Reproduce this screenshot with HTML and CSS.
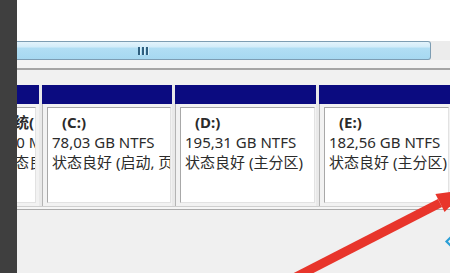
FILE: index.html
```html
<!DOCTYPE html>
<html lang="zh-CN">
<head>
    <meta charset="UTF-8">
    <title>磁盘管理</title>
    <link rel="stylesheet" href="styles.css">
</head>
<body>
    <div class="window">
        <div class="side-strip"></div>
        <div class="main">
            <div class="top-blank"></div>
            <div class="hscroll">
                <div class="thumb">
                    <span class="grip"><i></i><i></i><i></i></span>
                </div>
                <div class="track"></div>
            </div>
            <div class="band-top"></div>
            <div class="band-bottom"></div>

            <!-- 分区列表 -->
            <div class="volumes">
                <div class="vol vol-clip">
                    <div class="vol-head"></div>
                    <div class="vol-body">
                        <div class="vol-box">
                            <div class="shift">
                                <div class="line name">系统(</div>
                                <div class="line">100 MB NTFS</div>
                                <div class="line">状态良好</div>
                            </div>
                        </div>
                    </div>
                </div>
                <div class="vol vol-c">
                    <div class="vol-head"></div>
                    <div class="vol-body">
                        <div class="vol-box">
                            <div class="line name">(C:)</div>
                            <div class="line">78,03 GB NTFS</div>
                            <div class="line">状态良好 (启动, 页面文件)</div>
                        </div>
                    </div>
                </div>
                <div class="vol vol-d">
                    <div class="vol-head"></div>
                    <div class="vol-body">
                        <div class="vol-box">
                            <div class="line name">(D:)</div>
                            <div class="line">195,31 GB NTFS</div>
                            <div class="line">状态良好 (主分区)</div>
                        </div>
                    </div>
                </div>
                <div class="vol vol-e">
                    <div class="vol-head"></div>
                    <div class="vol-body">
                        <div class="vol-box">
                            <div class="line name">(E:)</div>
                            <div class="line">182,56 GB NTFS</div>
                            <div class="line">状态良好 (主分区)</div>
                        </div>
                    </div>
                </div>
            </div>
            <div class="bottom-area"></div>
        </div>
    </div>

    <!-- 标注箭头 -->
    <svg class="overlay" width="450" height="273" viewBox="0 0 450 273">
        <line x1="288" y1="281" x2="440" y2="203" stroke="#e8352b" stroke-width="9"/>
        <polygon points="444.6,212 435.4,194 465,190" fill="#e8352b"/>
        <polyline points="452,236 446.5,241.5 452,247" fill="none" stroke="#2a9fd6" stroke-width="2.2"/>
    </svg>
</body>
</html>
```

FILE: styles.css
```css
/* 全局 */
html, body {
    margin: 0;
    padding: 0;
}
body {
    width: 450px;
    height: 273px;
    overflow: hidden;
    position: relative;
    background: #f0f0f0;
    font-family: 'Noto Sans', 'Noto Sans CJK SC', sans-serif;
    font-size: 15px;
    color: #2b2b2b;
}
.window {
    display: flex;
    height: 273px;
}
.side-strip {
    width: 17px;
    flex: none;
    background-color: #3f3f3f;
}
.main {
    flex: 1;
    display: flex;
    flex-direction: column;
    min-width: 0;
}
.top-blank {
    height: 41px;
    background: #fff;
}

/* 水平滚动条 */
.hscroll {
    height: 19px;
    display: flex;
    background: #ececec;
}
.thumb {
    flex: 1;
    display: flex;
    justify-content: center;
    align-items: center;
    border: 1px solid #7d9db3;
    border-left: none;
    border-radius: 0 3px 3px 0;
    background: linear-gradient(#e3f3fc 0%, #d2ecf9 30%, #b1def4 35%, #a6d8f1 100%);
    box-sizing: border-box;
    padding-right: 162px;
}
.grip {
    display: flex;
    gap: 2px;
}
.grip i {
    width: 2px;
    height: 8px;
    background: #2f5f7f;
    box-shadow: 1px 0 0 #d9f0fb;
}
.track {
    width: 19px;
    background: #ececec;
}
.band-top {
    height: 8px;
    background: #f4f4f4;
    border-bottom: 2px solid #a6a6a6;
}
.band-bottom {
    height: 15px;
    background: #f1f1f1;
}

/* 分区列 */
.volumes {
    display: flex;
    gap: 3px;
    height: 121px;
    background: #e9e9e9;
    border-bottom: 1px solid #cfcfcf;
}
.vol {
    display: flex;
    flex-direction: column;
    flex: none;
    overflow: hidden;
}
.vol-clip { width: 22px; }
.vol-c { width: 130px; }
.vol-d { width: 141px; }
.vol-e { flex: 1; }
.vol-head {
    height: 19px;
    background: #0b0b80;
}
.vol-body {
    flex: 1;
    display: flex;
    padding: 3px 1px 3px 4px;
    border-left: 1px solid #b4b4b4;
    background: #f2f2f2;
}
.vol-box {
    flex: 1;
    background: #fff;
    border: 1px solid;
    border-color: #a8a8a8 #e2e2e2 #e2e2e2 #a8a8a8;
    padding: 4px 0 0 4px;
    overflow: hidden;
    white-space: nowrap;
}
.vol-clip .vol-body {
    border-left: none;
    padding: 3px 3px 3px 0;
}
.vol-clip .vol-box {
    border-left: none;
    padding-left: 0;
}
.shift {
    margin-left: -18px;
}
.line {
    height: 20px;
    line-height: 20px;
}
.line.name {
    font-weight: bold;
    padding-left: 10px;
}
.vol-clip .line.name {
    padding-left: 0;
}
.bottom-area {
    flex: 1;
    background: #f0f0f0;
    border-top: 2px solid #f6f6f6;
    box-shadow: inset 0 1px 0 #ababab;
}

/* 覆盖层 */
.overlay {
    position: absolute;
    left: 0;
    top: 0;
    pointer-events: none;
}
```
